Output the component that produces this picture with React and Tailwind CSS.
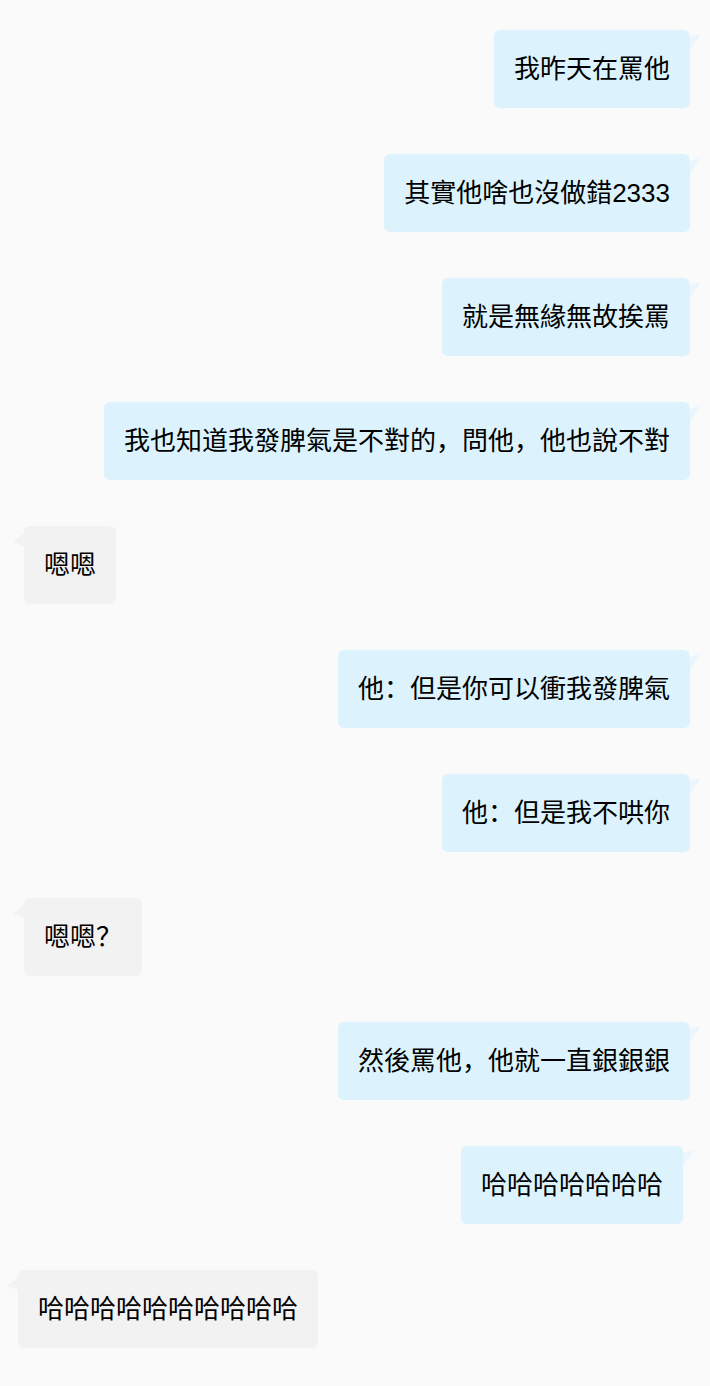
import React from "react";

const msgs = [
  { side: "r", text: "我昨天在罵他" },
  { side: "r", text: "其實他啥也沒做錯2333" },
  { side: "r", text: "就是無緣無故挨罵" },
  { side: "r", text: "我也知道我發脾氣是不對的，問他，他也說不對" },
  { side: "l", text: "嗯嗯" },
  { side: "r", text: "他：但是你可以衝我發脾氣" },
  { side: "r", text: "他：但是我不哄你" },
  { side: "l", text: "嗯嗯？" },
  { side: "r", text: "然後罵他，他就一直銀銀銀" },
  { side: "r", text: "哈哈哈哈哈哈哈", shift: true },
  { side: "l", text: "哈哈哈哈哈哈哈哈哈哈", shift: true },
];

function Bubble({ side, text, shift }) {
  if (side === "r") {
    return (
      <div className={shift ? "flex justify-end pr-[27px]" : "flex justify-end pr-5"}>
        <div className="relative rounded-md bg-[#dcf3fd] px-5 py-[21px] text-[26px] leading-[36px] text-black">
          {text}
          <svg className="absolute -right-[11px] top-[4px]" width="11" height="18" viewBox="0 0 11 18">
            <polygon points="0,3 11,0 0,16" fill="#e9f7fd" />
          </svg>
        </div>
      </div>
    );
  }
  return (
    <div className={shift ? "flex justify-start pl-[18px]" : "flex justify-start pl-6"}>
      <div className="relative rounded-md bg-[#f2f2f2] px-5 py-[21px] text-[26px] leading-[36px] text-black">
        {text}
        <svg className="absolute -left-[11px] top-[4px]" width="11" height="18" viewBox="0 0 11 18">
          <polygon points="11,3 0,12 11,16" fill="#f3f3f3" />
        </svg>
      </div>
    </div>
  );
}

export default function App() {
  return (
    <div
      className="flex min-h-[1386px] w-full flex-col gap-[46px] bg-[#fafafa] pt-[30px] pb-[37px]"
      style={{ fontFamily: '"Liberation Sans", "Noto Sans CJK SC", sans-serif' }}
    >
      {msgs.map((m, i) => (
        <Bubble key={i} {...m} />
      ))}
    </div>
  );
}
